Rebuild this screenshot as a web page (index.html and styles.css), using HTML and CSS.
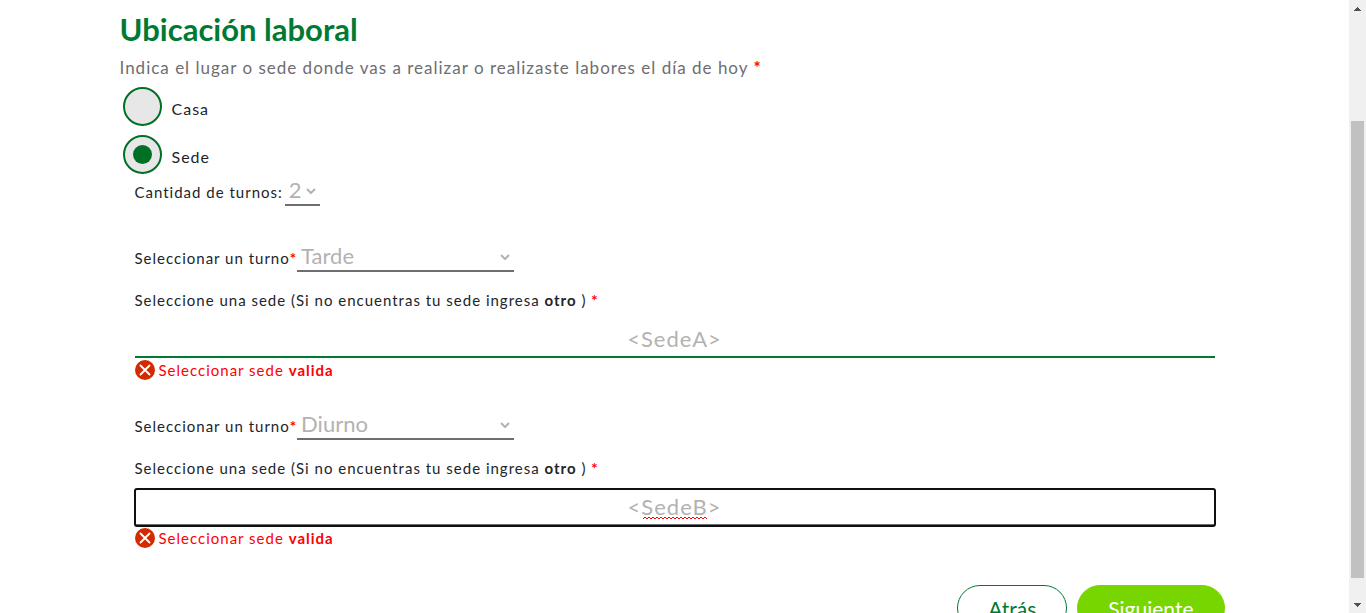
FILE: index.html
```html
<!DOCTYPE html>
<html lang="es">
<head>
<meta charset="utf-8">
<meta name="viewport" content="width=device-width, initial-scale=1">
<title>Ubicación laboral</title>
<link rel="stylesheet" href="styles.css">
</head>
<body>
<div class="window">
  <main class="page">
    <form class="container">
      <h1 class="title">Ubicación laboral</h1>
      <p class="lead" id="lugar">Indica el lugar o sede donde vas a realizar o realizaste labores el día de hoy <b class="required">*</b></p>
      <div class="options" role="radiogroup" aria-labelledby="lugar">
        <label class="option"><input class="radio" type="radio" name="lugar" value="casa"><span class="option-text">Casa</span></label>
        <label class="option"><input class="radio" type="radio" name="lugar" value="sede" checked><span class="option-text">Sede</span></label>
      </div>
      <div class="details">
        <div class="row row-count">
          <label class="row-label" for="cantidad">Cantidad de turnos:</label>
          <select class="select select-count" id="cantidad"><option>1</option><option selected>2</option></select>
        </div>
        <section class="shift">
          <div class="row">
            <label class="row-label" for="turno1">Seleccionar un turno<b class="required">*</b></label>
            <select class="select select-shift" id="turno1"><option selected>Tarde</option><option>Diurno</option></select>
          </div>
          <label class="site-label" for="sede1">Seleccione una sede (Si no encuentras tu sede ingresa <b>otro</b> ) <b class="required">*</b></label>
          <div class="field"><input class="site site-valid" id="sede1" type="text" value="&lt;SedeA&gt;" spellcheck="false"></div>
          <p class="error">
            <svg class="error-icon" viewBox="0 0 20 20" aria-hidden="true"><circle cx="10" cy="10" r="10" fill="#d42a00"/><path d="M5.500 5.500l9 9M14.500 5.500l-9 9" stroke="#fff" stroke-width="1.800" stroke-linecap="round"/></svg>
            <span>Seleccionar sede <b>valida</b></span>
          </p>
        </section>
        <section class="shift">
          <div class="row">
            <label class="row-label" for="turno2">Seleccionar un turno<b class="required">*</b></label>
            <select class="select select-shift" id="turno2"><option>Tarde</option><option selected>Diurno</option></select>
          </div>
          <label class="site-label" for="sede2">Seleccione una sede (Si no encuentras tu sede ingresa <b>otro</b> ) <b class="required">*</b></label>
          <div class="field">
            <input class="site site-active" id="sede2" type="text" value="&lt;SedeB&gt;" spellcheck="false">
            <svg class="squiggle" viewBox="0 0 64 4" aria-hidden="true"><path d="M0 3l2-2 2 2 2-2 2 2 2-2 2 2 2-2 2 2 2-2 2 2 2-2 2 2 2-2 2 2 2-2 2 2 2-2 2 2 2-2 2 2 2-2 2 2 2-2 2 2 2-2 2 2 2-2 2 2 2-2 2 2 2-2 2 2" fill="none" stroke="#f00" stroke-width="1"/></svg>
          </div>
          <p class="error">
            <svg class="error-icon" viewBox="0 0 20 20" aria-hidden="true"><circle cx="10" cy="10" r="10" fill="#d42a00"/><path d="M5.500 5.500l9 9M14.500 5.500l-9 9" stroke="#fff" stroke-width="1.800" stroke-linecap="round"/></svg>
            <span>Seleccionar sede <b>valida</b></span>
          </p>
        </section>
      </div>
      <div class="actions">
        <button class="button button-back" type="button">Atrás</button>
        <button class="button button-next" type="submit">Siguiente</button>
      </div>
    </form>
  </main>
  <div class="scrollbar" aria-hidden="true">
    <svg class="arrow" viewBox="0 0 17 17"><path d="M5 11h7v-1h-1v-1h-1v-1h-1v-1h-1v1h-1v1h-1v1h-1z" fill="#505050"/></svg>
    <div class="track"><div class="thumb"></div></div>
    <svg class="arrow" viewBox="0 0 17 17"><path d="M5 7h7v1h-1v1h-1v1h-1v1h-1v-1h-1v-1h-1v-1h-1z" fill="#505050"/></svg>
  </div>
</div>
</body>
</html>
```
FILE: styles.css
```css
*, *::before, *::after {
  box-sizing: border-box;
}

body {
  margin: 0;
  background: #fff;
  color: #212529;
  font-family: Lato, "Open Sans", sans-serif;
  font-size: 15px;
  line-height: 24px;
  letter-spacing: 1px;
}

.window {
  display: flex;
  height: 100vh;
  overflow: hidden;
}

.page {
  flex: 1;
  min-width: 0;
}

.container {
  max-width: 1140px;
  margin: 0 auto;
  padding: 7px 15px;
}

.title {
  margin: 0;
  color: #007a33;
  font-size: 31px;
  line-height: 44px;
  font-weight: 700;
  letter-spacing: 0;
}

.lead {
  margin: 5px 0 0;
  color: #6d6e71;
  font-size: 17px;
}

.required {
  color: #f00;
}

.options {
  display: grid;
  gap: 9px;
  padding: 7px 3px 0;
}

.option {
  display: flex;
  align-items: center;
  gap: 10px;
  justify-self: start;
  font-size: 16px;
}

.option-text {
  padding-top: 4px;
}

.radio {
  appearance: none;
  display: grid;
  place-items: center;
  width: 39px;
  height: 39px;
  margin: 0;
  border: 2px solid #007024;
  border-radius: 50%;
  background: #e7e7e7;
}

.radio:checked::before {
  content: "";
  width: 19px;
  height: 19px;
  border-radius: 50%;
  background: #007024;
}

.details {
  padding: 0 15px;
}

.row {
  display: flex;
  align-items: center;
}

.row-count {
  gap: 2px;
}

.row-label {
  padding-top: 4px;
}

.select {
  appearance: none;
  height: 32px;
  border: 0;
  border-bottom: 2px solid #6d6e71;
  border-radius: 0;
  padding: 0 4px;
  background: url("data:image/svg+xml,%3Csvg xmlns='http://www.w3.org/2000/svg' width='10' height='6'%3E%3Cpath d='M1 1l4 4 4-4' fill='none' stroke='%23b3b2b1' stroke-width='2'/%3E%3C/svg%3E") no-repeat right 4px top 14px;
  color: #b3b2b1;
  font: 22px Lato, "Open Sans", sans-serif;
}

.select-count {
  width: 35px;
}

.select-shift {
  width: 217px;
}

.shift {
  padding-top: 34px;
}

.shift + .shift {
  padding-top: 26px;
}

.site-label {
  display: block;
  margin-top: 16px;
}

.field {
  display: grid;
  position: relative;
  margin-top: 9px;
}

.site {
  width: 100%;
  height: 37px;
  padding: 0 4px 1px;
  border: 0;
  border-bottom: 2px solid #6d6e71;
  background: #fff;
  color: #b3b2b1;
  font: 22px Lato, "Open Sans", sans-serif;
  letter-spacing: 1px;
  text-align: center;
}

.site-valid {
  border-bottom-color: #007a33;
}

.site-active {
  outline: 2px solid #101010;
  outline-offset: -1px;
  border-radius: 2px;
}

.squiggle {
  position: absolute;
  bottom: 6px;
  left: calc(50% - 32px);
  width: 64px;
  height: 4px;
}

.error {
  display: flex;
  align-items: center;
  gap: 4px;
  margin: 0;
  color: #f00;
}

.error-icon {
  width: 20px;
  height: 20px;
}

.actions {
  display: flex;
  justify-content: flex-end;
  gap: 10px;
  padding: 35px 5px 20px;
}

.button {
  height: 46px;
  border: 1px solid #007a33;
  border-radius: 23px;
  padding: 0 30px;
  background: #fff;
  color: #007a33;
  font: 21px Lato, "Open Sans", sans-serif;
}

.button-next {
  border-color: #78d600;
  background: #78d600;
  color: #fff;
}

.scrollbar {
  display: flex;
  flex-direction: column;
  width: 17px;
  background: #f0f0f0;
}

.arrow {
  width: 17px;
  height: 17px;
}

.track {
  display: flex;
  flex: 1;
  flex-direction: column;
  justify-content: flex-end;
  padding: 0 2px 18px;
}

.thumb {
  height: 81.4%;
  background: #c1c1c1;
}
```
